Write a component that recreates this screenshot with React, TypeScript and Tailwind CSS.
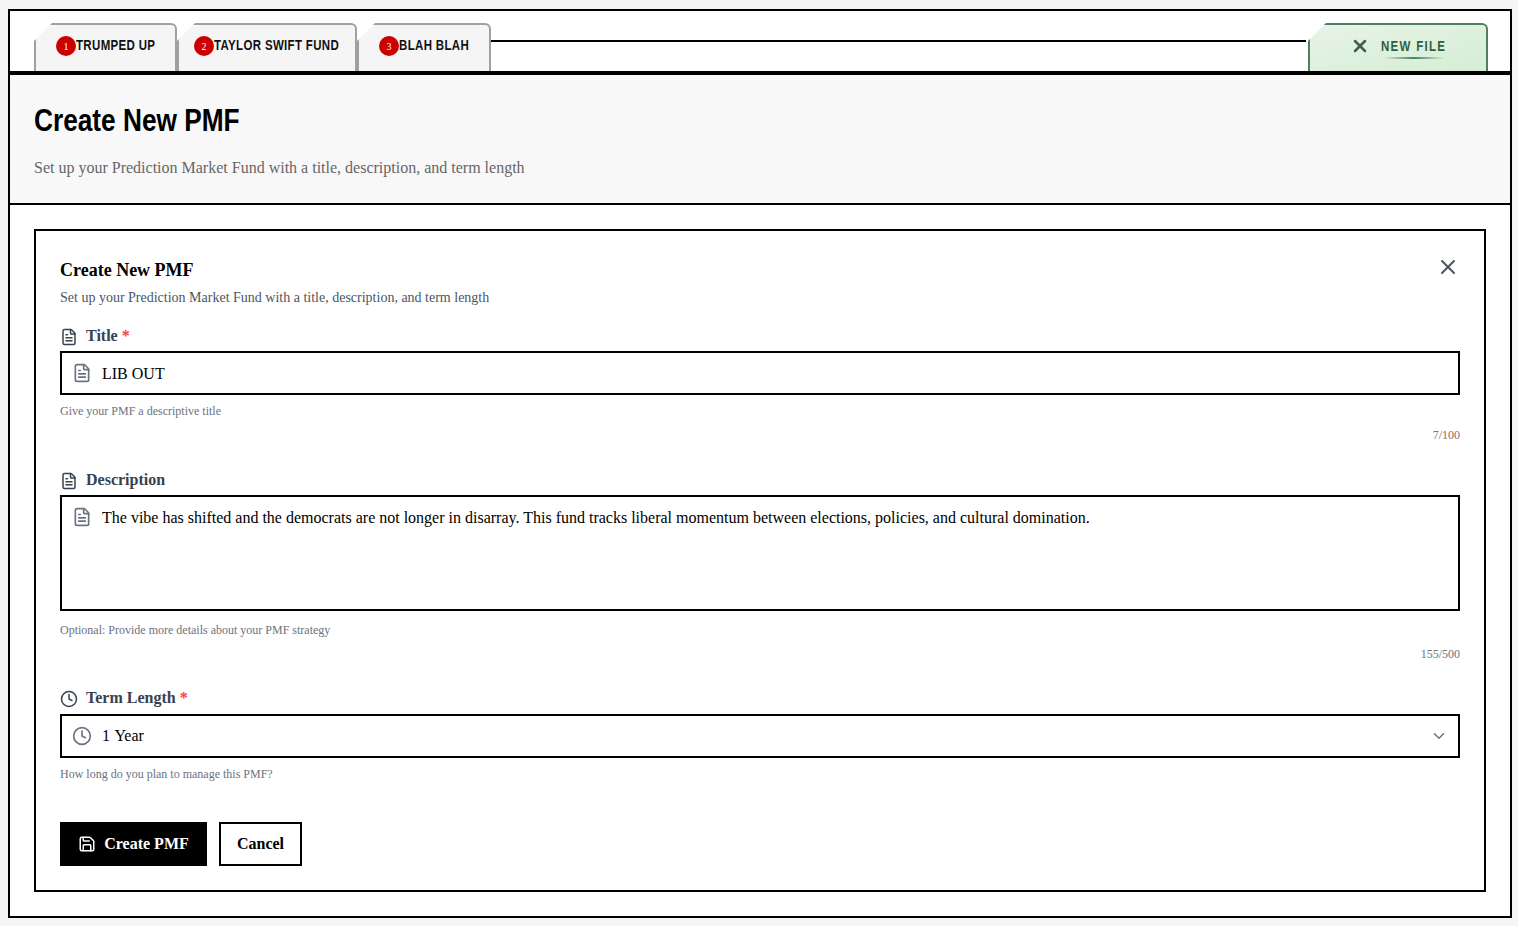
import React from "react";
import { FileText, Clock, X, ChevronDown, Save } from "lucide-react";

function Tab({ n, label, pad }: { n: number; label: string; pad: string }) {
  return (
    <div className={`h-[48px] flex items-center pb-[4px] ${pad} bg-[#f5f5f5] border-2 border-b-0 border-[#a0a0a0] rounded-tr-[6px] [clip-path:polygon(18px_0,100%_0,100%_100%,0_100%,0_18px)]`}>
      <span className="w-[20px] h-[20px] rounded-full bg-[#cc0000] text-white flex items-center justify-center text-[10px] font-['Liberation_Serif',serif] shrink-0">{n}</span>
      <span className="inline-block mb-[2px] origin-left scale-x-[0.82] text-[14px] font-bold font-['Liberation_Sans',sans-serif] text-[#111] tracking-[0.42px] whitespace-nowrap">{label}</span>
    </div>
  );
}

function Label({ icon, text, req }: { icon: React.ReactNode; text: string; req?: boolean }) {
  return (
    <div className="flex items-center gap-[8px] h-[24px] text-[16px] font-bold text-[#374151]">
      <span className="w-[18px] flex justify-center mt-[2px]">{icon}</span>
      <span>{text}{req && <span className="text-[#ef4444]"> *</span>}</span>
    </div>
  );
}

export default function App() {
  return (
    <div className="min-h-[926px] bg-[#f5f5f5] pl-[8px] pr-[6px] pt-[9px] pb-[8px] font-['Liberation_Serif',serif]">
      <div className="border-2 border-black bg-white h-[909px]">
        <div className="h-[60px] flex items-end pl-[24px] pr-[22px]">
          <Tab n={1} label="TRUMPED UP" pad="w-[143px] pl-[20px]" />
          <Tab n={2} label="TAYLOR SWIFT FUND" pad="w-[180px] pl-[15px]" />
          <Tab n={3} label="BLAH BLAH" pad="w-[134px] pl-[20px]" />
          <div className="flex-1 self-start mt-[29px] mr-[2px] h-[2px] bg-black" />
          <div className="relative w-[180px] h-[48px] flex items-center pb-[4px] pl-[40px] gap-[11px] border-2 border-b-0 border-[#4f7f5f] rounded-tr-[6px] bg-gradient-to-br from-[#e8f3e8] to-[#d4eed4] [clip-path:polygon(18px_0,100%_0,100%_100%,0_100%,0_18px)]">
            <X size={20} strokeWidth={3} className="text-[#3f5f4f]" />
            <span className="inline-block origin-left scale-x-[0.82] text-[14px] font-bold font-['Liberation_Sans',sans-serif] text-[#2f5f3f] tracking-[1.6px] whitespace-nowrap">NEW FILE</span>
            <span className="absolute left-[74px] top-[32px] w-[60px] h-[2px] bg-gradient-to-r from-transparent via-[#4f7f5f] to-transparent" />
          </div>
        </div>
        <div className="h-[4px] bg-black" />
        <div className="h-[128px] bg-[#f8f8f8] px-[24px] pt-[25px]">
          <h1 className="origin-left scale-x-[0.82] text-[32px] leading-[40px] font-bold font-['Liberation_Sans',sans-serif] text-black">Create New PMF</h1>
          <p className="mt-[16px] text-[16px] leading-[24px] text-[#666]">Set up your Prediction Market Fund with a title, description, and term length</p>
        </div>
        <div className="h-[2px] bg-black" />
        <div className="p-[24px]">
          <div className="relative border-2 border-black h-[663px] px-[24px] pt-[27px]">
            <X size={24} strokeWidth={2} className="absolute right-[24px] top-[24px] text-[#4b5563]" />
            <h2 className="text-[18px] leading-[24px] font-bold text-black">Create New PMF</h2>
            <p className="mt-[6px] text-[14px] leading-[20px] text-[#4b5563]">Set up your Prediction Market Fund with a title, description, and term length</p>

            <div className="mt-[16px]">
              <Label icon={<FileText size={18} className="text-[#374151]" />} text="Title" req />
            </div>
            <div className="mt-[3px] h-[44px] border-2 border-black flex items-center pl-[10px] gap-[10px] text-[16px] text-black">
              <FileText size={20} className="text-[#6b7280]" />
              <span className="pt-[2px]">LIB OUT</span>
            </div>
            <p className="mt-[7px] text-[12px] leading-[18px] text-[#6b7280]">Give your PMF a descriptive title</p>
            <p className="mt-[6px] text-[12px] leading-[18px] text-[#8a7060] text-right">7/100</p>

            <div className="mt-[24px]">
              <Label icon={<FileText size={18} className="text-[#374151]" />} text="Description" />
            </div>
            <div className="mt-[3px] h-[116px] border-2 border-black flex items-start pt-[10px] pl-[10px] gap-[10px] text-[16px] leading-[20px] text-black">
              <FileText size={20} className="text-[#6b7280] shrink-0" />
              <span className="pt-[1px]">The vibe has shifted and the democrats are not longer in disarray. This fund tracks liberal momentum between elections, policies, and cultural domination.</span>
            </div>
            <p className="mt-[10px] text-[12px] leading-[18px] text-[#6b7280]">Optional: Provide more details about your PMF strategy</p>
            <p className="mt-[6px] text-[12px] leading-[18px] text-[#6b7280] text-right">155/500</p>

            <div className="mt-[23px]">
              <Label icon={<Clock size={18} className="text-[#374151]" />} text="Term Length" req />
            </div>
            <div className="mt-[4px] h-[44px] border-2 border-black flex items-center pl-[10px] pr-[10px] gap-[10px] text-[16px] text-black">
              <Clock size={20} className="text-[#6b7280]" />
              <span className="flex-1 [word-spacing:1px]">1 Year</span>
              <ChevronDown size={18} className="text-[#6b7280]" />
            </div>
            <p className="mt-[7px] text-[12px] leading-[18px] text-[#6b7280]">How long do you plan to manage this PMF?</p>

            <div className="mt-[39px] flex gap-[12px]">
              <div className="h-[44px] w-[147px] bg-black text-white flex items-center justify-center gap-[8px] text-[16px] font-bold">
                <Save size={18} />Create PMF
              </div>
              <div className="h-[44px] w-[83px] border-2 border-black text-black flex items-center justify-center text-[16px] font-bold">Cancel</div>
            </div>
          </div>
        </div>
      </div>
    </div>
  );
}
